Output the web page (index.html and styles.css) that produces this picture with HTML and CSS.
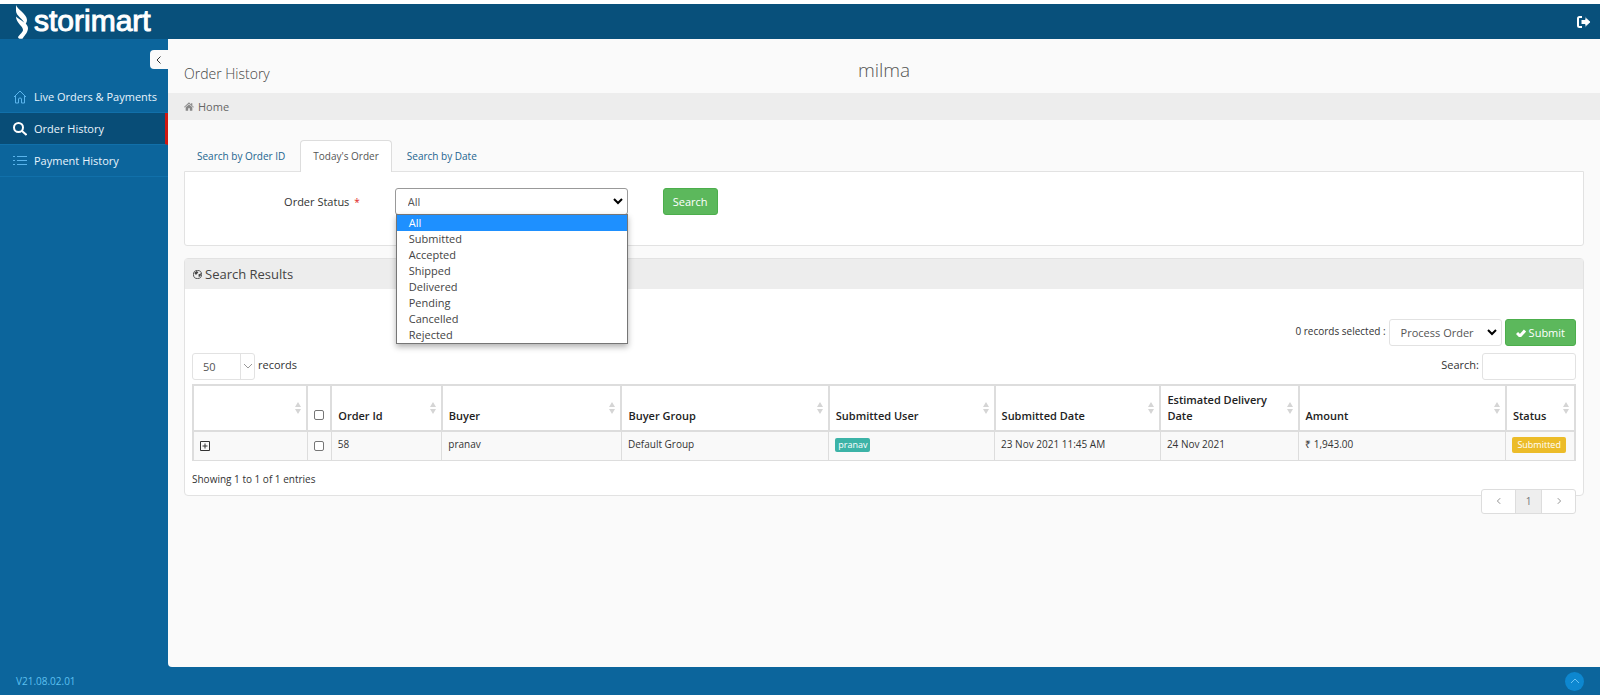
FILE: index.html
```html
<!DOCTYPE html>
<html lang="en">
<head>
    <meta charset="UTF-8">
    <meta name="viewport" content="width=device-width, initial-scale=1.0">
    <title>Order History</title>
    <link rel="stylesheet" href="styles.css">
</head>
<body>

<svg class="sprite" aria-hidden="true">
    <symbol id="sort" viewBox="0 0 8 14">
        <path d="M4 1 7 6H1zM4 13 1 8h6z"/>
    </symbol>
    <symbol id="chevron" viewBox="0 0 10 10">
        <path d="M6.5 1.5 3 5l3.500 3.500"/>
    </symbol>
</svg>

<header class="header">
    <a class="logo" href="#">
        <svg class="logo-mark" viewBox="0 0 12 34">
            <path d="M0 0C1 4 11 9 11 15c0 2-1 3-2 5C8 14 0 11 0 6z"/>
            <path d="M0 11.500C3 15 12 18 12 23c0 4-3 7-5 10-1 1.500-5 1-5-1C4 29 7 27 7 25 7 21 0 18 0 11.500z"/>
        </svg>
        <span class="logo-text">storimart</span>
    </a>
    <button type="button" class="logout" aria-label="Log out">
        <svg viewBox="0 0 16 14">
            <path class="door" d="M6 2H3.500Q2 2 2 3.500v7Q2 12 3.500 12H6"/>
            <path class="arrow" d="M9 1.500 15 7l-6 5.500V9.500H5v-5h4z"/>
        </svg>
    </button>
</header>

<div class="container">
    <nav class="sidebar">
        <button type="button" class="sidebar-toggle" aria-label="Collapse menu">
            <svg viewBox="0 0 10 10"><use href="#chevron"/></svg>
        </button>
        <ul class="menu">
            <li>
                <a href="#">
                    <svg viewBox="0 0 14 14"><path d="M1 7 7 1l6 6M2.500 6v7H5.500V9Q5.500 8 7 8t1.500 1v4h3V6"/></svg>
                    Live Orders &amp; Payments
                </a>
            </li>
            <li class="active">
                <a href="#">
                    <svg viewBox="0 0 14 14"><circle cx="5.500" cy="5.500" r="4.500"/><path d="M9 9l4.500 4"/></svg>
                    Order History
                </a>
            </li>
            <li>
                <a href="#">
                    <svg viewBox="0 0 14 14"><path d="M0 2.500h2M4 2.500h10M0 6.500h2M4 6.500h10M0 10.500h2M4 10.500h10"/></svg>
                    Payment History
                </a>
            </li>
        </ul>
    </nav>

    <main class="content">
        <div class="page-title">
            <h1>Order History</h1>
            <h2>milma</h2>
        </div>
        <div class="breadcrumb">
            <svg viewBox="0 0 12 10"><path d="M6 0 8.500 2.500V1h1.500v3L12 5.500l-.7.7L6 1.700.7 6.200 0 5.500zM6 2.700 10 6v4H7V7H5v3H2V6z"/></svg>
            <a href="#">Home</a>
        </div>

        <div class="page-body">
            <div class="tabs">
                <button type="button" class="tab">Search by Order ID</button>
                <button type="button" class="tab active">Today's Order</button>
                <button type="button" class="tab">Search by Date</button>
            </div>
            <form class="search-form">
                <label for="status">Order Status <span class="required">*</span></label>
                <div class="select-wrap">
                    <select id="status" class="control dark">
                        <option>All</option>
                        <option>Submitted</option>
                        <option>Accepted</option>
                        <option>Shipped</option>
                        <option>Delivered</option>
                        <option>Pending</option>
                        <option>Cancelled</option>
                        <option>Rejected</option>
                    </select>
                    <svg class="caret" viewBox="0 0 10 10"><path d="M1 3l4 4 4-4"/></svg>
                    <ul class="options">
                        <li class="selected">All</li>
                        <li>Submitted</li>
                        <li>Accepted</li>
                        <li>Shipped</li>
                        <li>Delivered</li>
                        <li>Pending</li>
                        <li>Cancelled</li>
                        <li>Rejected</li>
                    </ul>
                </div>
                <button type="button" class="button">Search</button>
            </form>

            <section class="portlet">
                <div class="portlet-title">
                    <svg viewBox="0 0 10 10">
                        <circle cx="5" cy="5" r="4.500"/>
                        <path d="M1.500 3 4 1 6 2.500 4 5 2.500 5zM6 5 9 3.500 8.500 6.500 6.500 8z"/>
                    </svg>
                    <h3>Search Results</h3>
                </div>
                <div class="portlet-body">
                    <div class="actions">
                        <label for="process">0 records selected :</label>
                        <div class="select-wrap process">
                            <select id="process" class="control">
                                <option>Process Order</option>
                            </select>
                            <svg class="caret" viewBox="0 0 10 10"><path d="M1 3l4 4 4-4"/></svg>
                        </div>
                        <button type="button" class="button submit">
                            <svg viewBox="0 0 10 8"><path d="M1 4l3 3 5-5.500"/></svg>
                            Submit
                        </button>
                    </div>
                    <div class="table-tools">
                        <div class="length">
                            <div class="select-wrap small">
                                <select id="length" class="control">
                                    <option>50</option>
                                </select>
                                <svg class="caret" viewBox="0 0 10 10"><path d="M1 3l4 4 4-4"/></svg>
                            </div>
                            <label for="length">records</label>
                        </div>
                        <div class="filter">
                            <label for="filter">Search:</label>
                            <input type="text" id="filter" class="control">
                        </div>
                    </div>
                    <table class="orders">
                        <thead>
                            <tr>
                                <th class="col-expand"><div class="head"><svg class="sort"><use href="#sort"/></svg></div></th>
                                <th class="col-check"><input type="checkbox" aria-label="Select all"></th>
                                <th class="col-id"><div class="head">Order Id<svg class="sort"><use href="#sort"/></svg></div></th>
                                <th class="col-buyer"><div class="head">Buyer<svg class="sort"><use href="#sort"/></svg></div></th>
                                <th class="col-wide"><div class="head">Buyer Group<svg class="sort"><use href="#sort"/></svg></div></th>
                                <th class="col-date"><div class="head">Submitted User<svg class="sort"><use href="#sort"/></svg></div></th>
                                <th class="col-date"><div class="head">Submitted Date<svg class="sort"><use href="#sort"/></svg></div></th>
                                <th class="col-delivery"><div class="head">Estimated Delivery Date<svg class="sort"><use href="#sort"/></svg></div></th>
                                <th class="col-wide"><div class="head">Amount<svg class="sort"><use href="#sort"/></svg></div></th>
                                <th class="col-status"><div class="head">Status<svg class="sort"><use href="#sort"/></svg></div></th>
                            </tr>
                        </thead>
                        <tbody>
                            <tr>
                                <td>
                                    <button type="button" class="expand" aria-label="Expand row">
                                        <svg viewBox="0 0 10 10"><path d="M.5.5h9v9h-9zM5 2.500v5M2.500 5h5"/></svg>
                                    </button>
                                </td>
                                <td class="check"><input type="checkbox" aria-label="Select order 58"></td>
                                <td>58</td>
                                <td>pranav</td>
                                <td>Default Group</td>
                                <td><span class="label user">pranav</span></td>
                                <td>23 Nov 2021 11:45 AM</td>
                                <td>24 Nov 2021</td>
                                <td>₹ 1,943.00</td>
                                <td><span class="label status">Submitted</span></td>
                            </tr>
                        </tbody>
                    </table>
                    <div class="table-footer">
                        <span>Showing 1 to 1 of 1 entries</span>
                        <div class="pagination">
                            <button type="button" aria-label="Previous page"><svg viewBox="0 0 10 10"><use href="#chevron"/></svg></button>
                            <button type="button" class="current">1</button>
                            <button type="button" aria-label="Next page"><svg class="flip" viewBox="0 0 10 10"><use href="#chevron"/></svg></button>
                        </div>
                    </div>
                </div>
            </section>
        </div>
    </main>
</div>

<footer class="footer">
    <span>V21.08.02.01</span>
    <a class="to-top" href="#" aria-label="Back to top">
        <svg viewBox="0 0 10 10"><path d="M1 7l4-4 4 4"/></svg>
    </a>
</footer>

</body>
</html>
```
FILE: styles.css
```css
* {
    box-sizing: border-box;
}
body {
    display: flex;
    flex-direction: column;
    min-height: 100vh;
    margin: 0;
    padding: 4px 0 3px;
    font-family: "Open Sans", sans-serif;
    font-size: 11px;
    line-height: 16px;
    color: #333;
    background: #fff;
}
button, input, select {
    font: inherit;
}
button {
    cursor: pointer;
}
h1, h2, h3, ul {
    margin: 0;
    padding: 0;
    font-weight: normal;
}
ul {
    list-style: none;
}
a {
    text-decoration: none;
}
svg {
    display: block;
    flex: none;
    fill: none;
    stroke: currentColor;
}
.sprite {
    display: none;
}

/* header */
.header {
    display: flex;
    align-items: center;
    justify-content: space-between;
    height: 35px;
    padding: 0 8px 0 16px;
    background: #08507b;
}
.logo {
    display: flex;
    align-items: center;
    gap: 6px;
    color: #fff;
}
.logo-mark {
    width: 12px;
    height: 34px;
    fill: #fff;
    stroke: none;
}
.logo-text {
    padding-bottom: 2px;
    font-family: "Liberation Sans", sans-serif;
    font-size: 30px;
    line-height: 30px;
    -webkit-text-stroke: 1px #fff;
}
.logout {
    padding: 0;
    border: none;
    background: none;
    color: #fff;
}
.logout svg {
    width: 16px;
    height: 14px;
}
.logout .door {
    stroke-width: 2;
}
.logout .arrow {
    fill: #fff;
    stroke: #08507b;
}

/* layout */
.container {
    display: flex;
    flex: 1;
    background: #0c659c;
}
.sidebar {
    flex: none;
    width: 168px;
    padding-top: 11px;
}
.content {
    flex: 1;
    min-width: 0;
    background: #fafafa;
    border-radius: 0 0 0 4px;
}

/* sidebar */
.sidebar-toggle {
    display: block;
    width: 18px;
    height: 19px;
    margin: 0 0 12px auto;
    padding: 4px;
    border: none;
    border-radius: 4px 0 0 4px;
    background: #fafafa;
    color: #333;
}
.sidebar-toggle svg {
    width: 10px;
    height: 10px;
}
.menu li {
    border-bottom: 1px solid #1170aa;
}
.menu a {
    display: flex;
    align-items: center;
    gap: 7px;
    height: 31px;
    padding-left: 13px;
    color: #e8f4fc;
}
.menu svg {
    width: 14px;
    height: 14px;
    color: #5ab4ec;
}
.menu .active {
    background: #084d77;
    border-right: 3px solid #d01810;
}
.menu .active svg {
    color: #fff;
    stroke-width: 2;
}

/* page title */
.page-title {
    display: grid;
    grid-template-columns: 1fr auto 1fr;
    align-items: center;
    height: 54px;
    padding: 12px 16px 0;
}
.page-title h1 {
    padding-top: 4px;
    font-size: 14px;
    font-weight: 300;
    color: #444;
}
.page-title h2 {
    padding-bottom: 4px;
    font-size: 19px;
    font-weight: 300;
    color: #555;
}
.breadcrumb {
    display: flex;
    align-items: center;
    gap: 4px;
    height: 27px;
    padding-left: 16px;
    background: #ededed;
}
.breadcrumb svg {
    width: 10px;
    height: 9px;
    fill: #888;
    stroke: none;
}
.breadcrumb a {
    color: #666;
}
.page-body {
    padding: 20px 16px;
}

/* tabs */
.tabs {
    display: flex;
    gap: 2px;
}
.tab {
    height: 32px;
    margin-bottom: -1px;
    padding: 0 12px 2px;
    border: 1px solid transparent;
    border-bottom: none;
    border-radius: 4px 4px 0 0;
    background: none;
    font-size: 10px;
    color: #23648f;
}
.tab.active {
    border-color: #ddd;
    background: #fff;
    color: #555;
}
.search-form {
    display: flex;
    align-items: flex-start;
    height: 75px;
    padding-top: 16px;
    border: 1px solid #e2e2e2;
    border-radius: 0 0 3px 3px;
    background: #fff;
}
.search-form label {
    width: 12.5%;
    padding-top: 6px;
    text-align: right;
}
.search-form .select-wrap {
    width: calc(100% / 6);
    margin: 0 35px;
}
.required {
    margin-left: 2px;
    font-size: 10px;
    color: #e02222;
}

/* form controls */
.control {
    width: 100%;
    height: 27px;
    padding: 0 12px;
    border: 1px solid #e2e2e2;
    border-radius: 3px;
    background: #fff;
    color: #555;
    appearance: none;
}
.control.dark {
    border-color: #999;
}
.select-wrap {
    position: relative;
}
.caret {
    position: absolute;
    top: 8px;
    right: 5px;
    width: 10px;
    height: 10px;
    color: #000;
    stroke-width: 2;
    pointer-events: none;
}
.options {
    position: absolute;
    top: 26px;
    left: 1px;
    right: 0;
    z-index: 5;
    border: 1px solid #767676;
    background: #fff;
    box-shadow: 0 3px 6px rgba(0, 0, 0, 0.3);
    color: #444;
}
.options li {
    padding-left: 12px;
}
.options .selected {
    background: #1e90ff;
    color: #fff;
}
.button {
    height: 27px;
    padding: 0 9px;
    border: 1px solid #4cae4c;
    border-radius: 3px;
    background: #5cb85c;
    color: #fff;
}
.submit {
    display: flex;
    align-items: center;
    gap: 3px;
    padding: 0 10px;
}
.submit svg {
    width: 10px;
    height: 8px;
    stroke-width: 3;
}

/* search results */
.portlet {
    margin-top: 12px;
    border: 1px solid #e2e2e2;
    border-radius: 4px;
    background: #fff;
}
.portlet-title {
    display: flex;
    align-items: center;
    gap: 3px;
    height: 30px;
    padding-left: 8px;
    background: #ededed;
}
.portlet-title svg {
    width: 9px;
    height: 9px;
    stroke: #444;
}
.portlet-title path {
    fill: #444;
    stroke: none;
}
.portlet-title h3 {
    font-size: 13px;
    color: #444;
}
.portlet-body {
    padding: 30px 7px 0;
}
.actions {
    display: flex;
    justify-content: flex-end;
    gap: 3px;
}
.actions label {
    padding-top: 4px;
    font-size: 10px;
}
.process {
    width: 113px;
}
.process .control {
    padding: 0 11px;
}
.table-tools {
    display: flex;
    justify-content: space-between;
    padding: 7px 0 4px;
}
.length, .filter {
    display: flex;
    gap: 3px;
}
.length label, .filter label {
    padding-top: 4px;
}
.small {
    width: 63px;
}
.small .control {
    padding: 0 10px;
    background: linear-gradient(#e2e2e2, #e2e2e2) right 13px top / 1px 100% no-repeat #fff;
}
.small .caret {
    right: 2px;
    color: #999;
    stroke-width: 1;
}
.filter .control {
    width: 94px;
}

/* orders table */
.orders {
    width: 100%;
    table-layout: fixed;
    border-collapse: collapse;
    border: 2px solid #ddd;
    border-bottom-width: 1px;
}
.orders th, .orders td {
    border: 1px solid #ddd;
    text-align: left;
}
.orders th {
    height: 46px;
    padding: 0 4px 6px 6px;
    border-width: 2px;
    vertical-align: bottom;
    font-weight: 600;
    color: #222;
}
.orders td {
    height: 29px;
    padding: 4px 6px 6px;
    vertical-align: top;
    background: #f9f9f9;
    font-size: 10px;
}
.head {
    display: flex;
    align-items: flex-end;
    justify-content: space-between;
}
.sort {
    width: 8px;
    height: 14px;
    margin: 0 0 9px auto;
    fill: #d5d5d5;
    stroke: none;
}
.orders input {
    display: block;
    width: 10px;
    height: 10px;
    margin: 0 auto;
    border: 1px solid #767676;
    border-radius: 2px;
    background: #fff;
    appearance: none;
}
.orders .col-check {
    padding: 0 0 10px;
}
.orders .check {
    padding: 9px 0 0;
}
.col-expand { width: 114px; }
.col-check { width: 24px; }
.col-id { width: 8%; }
.col-buyer { width: 13%; }
.col-wide { width: 15%; }
.col-date { width: 12%; }
.col-delivery { width: 10%; }
.col-status { width: 5%; }
.expand {
    display: block;
    margin-top: 5px;
    padding: 0;
    border: none;
    background: none;
    color: #333;
}
.expand svg {
    width: 10px;
    height: 10px;
}
.label {
    display: inline-block;
    padding: 0 3px;
    border-radius: 2px;
    font-size: 9px;
    line-height: 14px;
    color: #fff;
}
.user {
    background: #3cb3a7;
}
.status {
    padding: 1px 5px;
    background: #ecbc29;
}
.table-footer {
    display: flex;
    align-items: flex-start;
    justify-content: space-between;
    height: 34px;
    padding-top: 10px;
    font-size: 10px;
}
.pagination {
    display: flex;
    margin-top: 18px;
    border: 1px solid #ddd;
    border-radius: 3px;
    background: #fff;
}
.pagination button {
    display: flex;
    align-items: center;
    justify-content: center;
    width: 33px;
    height: 23px;
    padding: 0;
    border: none;
    background: none;
    color: #777;
}
.pagination .current {
    width: 27px;
    border: 1px solid #ddd;
    border-width: 0 1px;
    background: #eee;
}
.pagination svg {
    width: 8px;
    height: 8px;
}
.flip {
    transform: scaleX(-1);
}

/* footer */
.footer {
    display: flex;
    align-items: center;
    justify-content: space-between;
    height: 28px;
    padding: 0 16px;
    background: #0c659c;
    font-size: 10px;
    color: #5cc0f0;
}
.to-top {
    display: flex;
    align-items: center;
    justify-content: center;
    width: 19px;
    height: 19px;
    border-radius: 50%;
    background: #0d87d0;
    color: #6cc4f5;
}
.to-top svg {
    width: 10px;
    height: 10px;
}
```
